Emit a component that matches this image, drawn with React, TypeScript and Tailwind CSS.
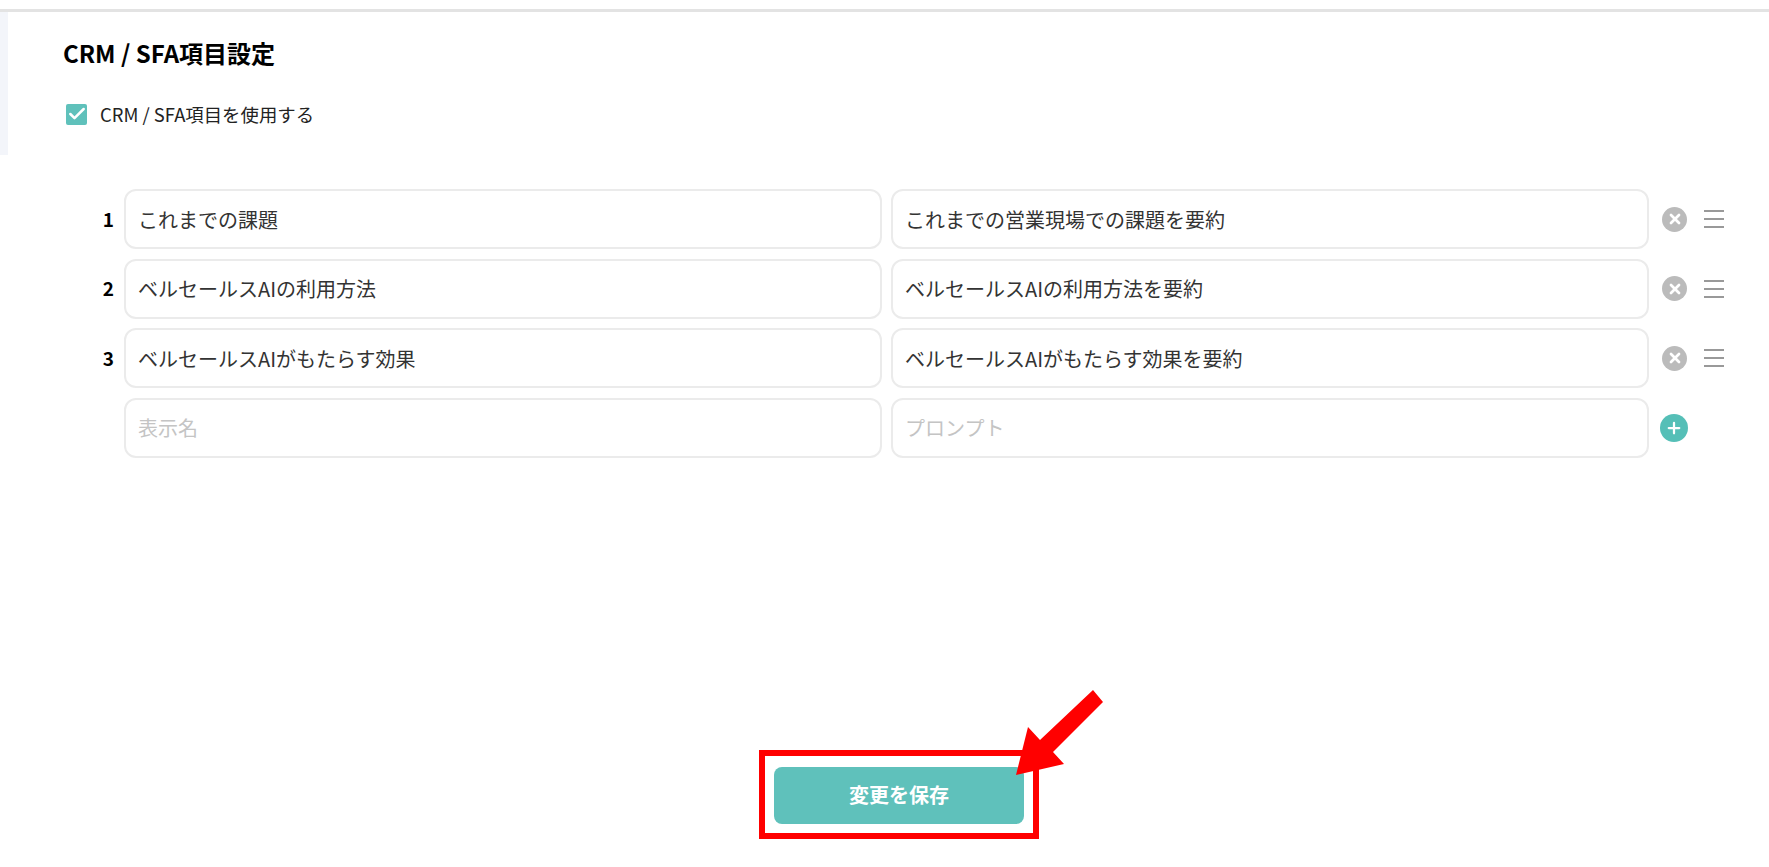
import { Check, Plus, X } from 'lucide-react';

const rows = [
  { name: 'これまでの課題', prompt: 'これまでの営業現場での課題を要約' },
  { name: 'ベルセールスAIの利用方法', prompt: 'ベルセールスAIの利用方法を要約' },
  { name: 'ベルセールスAIがもたらす効果', prompt: 'ベルセールスAIがもたらす効果を要約' },
];

const inputClass =
  'h-[60px] w-[758px] shrink-0 rounded-[12px] border-2 border-[#ebebeb] bg-white px-[12px] text-[20px] text-[#333333] outline-none placeholder:text-[#c4c4c4]';

export default function App() {
  return (
    <div className="relative h-[867px] w-full overflow-hidden bg-white font-['Noto_Sans_CJK_JP','Noto_Sans',sans-serif]">
      {/* Top rule */}
      <div className="mt-[9px] h-[3px] w-full bg-[#e3e3e3]" />

      <div className="flex">
        {/* Sidebar edge */}
        <div className="h-[143px] w-[8px] shrink-0 bg-[#f3f5fa]" />

        <div className="flex-1 pl-[55px]">
          <h1 className="mt-[23px] text-[24px] leading-[36px] font-bold text-black">CRM / SFA項目設定</h1>

          <label className="mt-[31px] ml-[3px] flex items-center gap-[13px]">
            <span className="flex h-[21px] w-[21px] items-center justify-center rounded-[2px] bg-[#5fc1bb]">
              <Check className="h-[20px] w-[20px] text-white" strokeWidth={3} />
            </span>
            <span className="text-[18.4px] leading-[24px] text-[#222222]">CRM / SFA項目を使用する</span>
          </label>

          {/* Item rows */}
          <div className="mt-[63px] flex flex-col gap-[9.5px]">
            {rows.map((row, i) => (
              <div key={row.name} className="flex items-center">
                <span className="w-[61px] pr-[10px] text-right text-[19px] font-bold text-black">{i + 1}</span>
                <input readOnly value={row.name} className={inputClass} />
                <input readOnly value={row.prompt} className={`${inputClass} ml-[9px]`} />
                <span className="ml-[13px] flex h-[25px] w-[25px] items-center justify-center rounded-full bg-[#bbbbbb]">
                  <X className="h-[16px] w-[16px] text-white" strokeWidth={4} />
                </span>
                <span className="ml-[17px] flex w-[20px] flex-col gap-[6px]">
                  <span className="h-[2px] bg-[#999999]" />
                  <span className="h-[2px] bg-[#999999]" />
                  <span className="h-[2px] bg-[#999999]" />
                </span>
              </div>
            ))}
            <div className="flex items-center">
              <span className="w-[61px]" />
              <input readOnly placeholder="表示名" className={inputClass} />
              <input readOnly placeholder="プロンプト" className={`${inputClass} ml-[9px]`} />
              <span className="ml-[11px] flex h-[28px] w-[28px] items-center justify-center rounded-full bg-[#55bfb7]">
                <Plus className="h-[18px] w-[18px] text-white" strokeWidth={3} />
              </span>
            </div>
          </div>
        </div>
      </div>

      {/* Save button with red annotation */}
      <div className="absolute top-[750px] left-[759px] border-[6px] border-[#ff0000] px-[9px] pt-[11px] pb-[9px]">
        <button className="h-[57px] w-[250px] rounded-[8px] bg-[#5fc1bb] pb-[2px] text-[20px] font-bold text-white">
          変更を保存
        </button>
      </div>
      <svg className="absolute top-[685px] left-[1010px] h-[95px] w-[100px]" viewBox="0 0 100 95">
        <polygon points="83,5 93,17 43,67 54,79 6,90 18,42 30,55" fill="#ff0000" />
      </svg>
    </div>
  );
}
